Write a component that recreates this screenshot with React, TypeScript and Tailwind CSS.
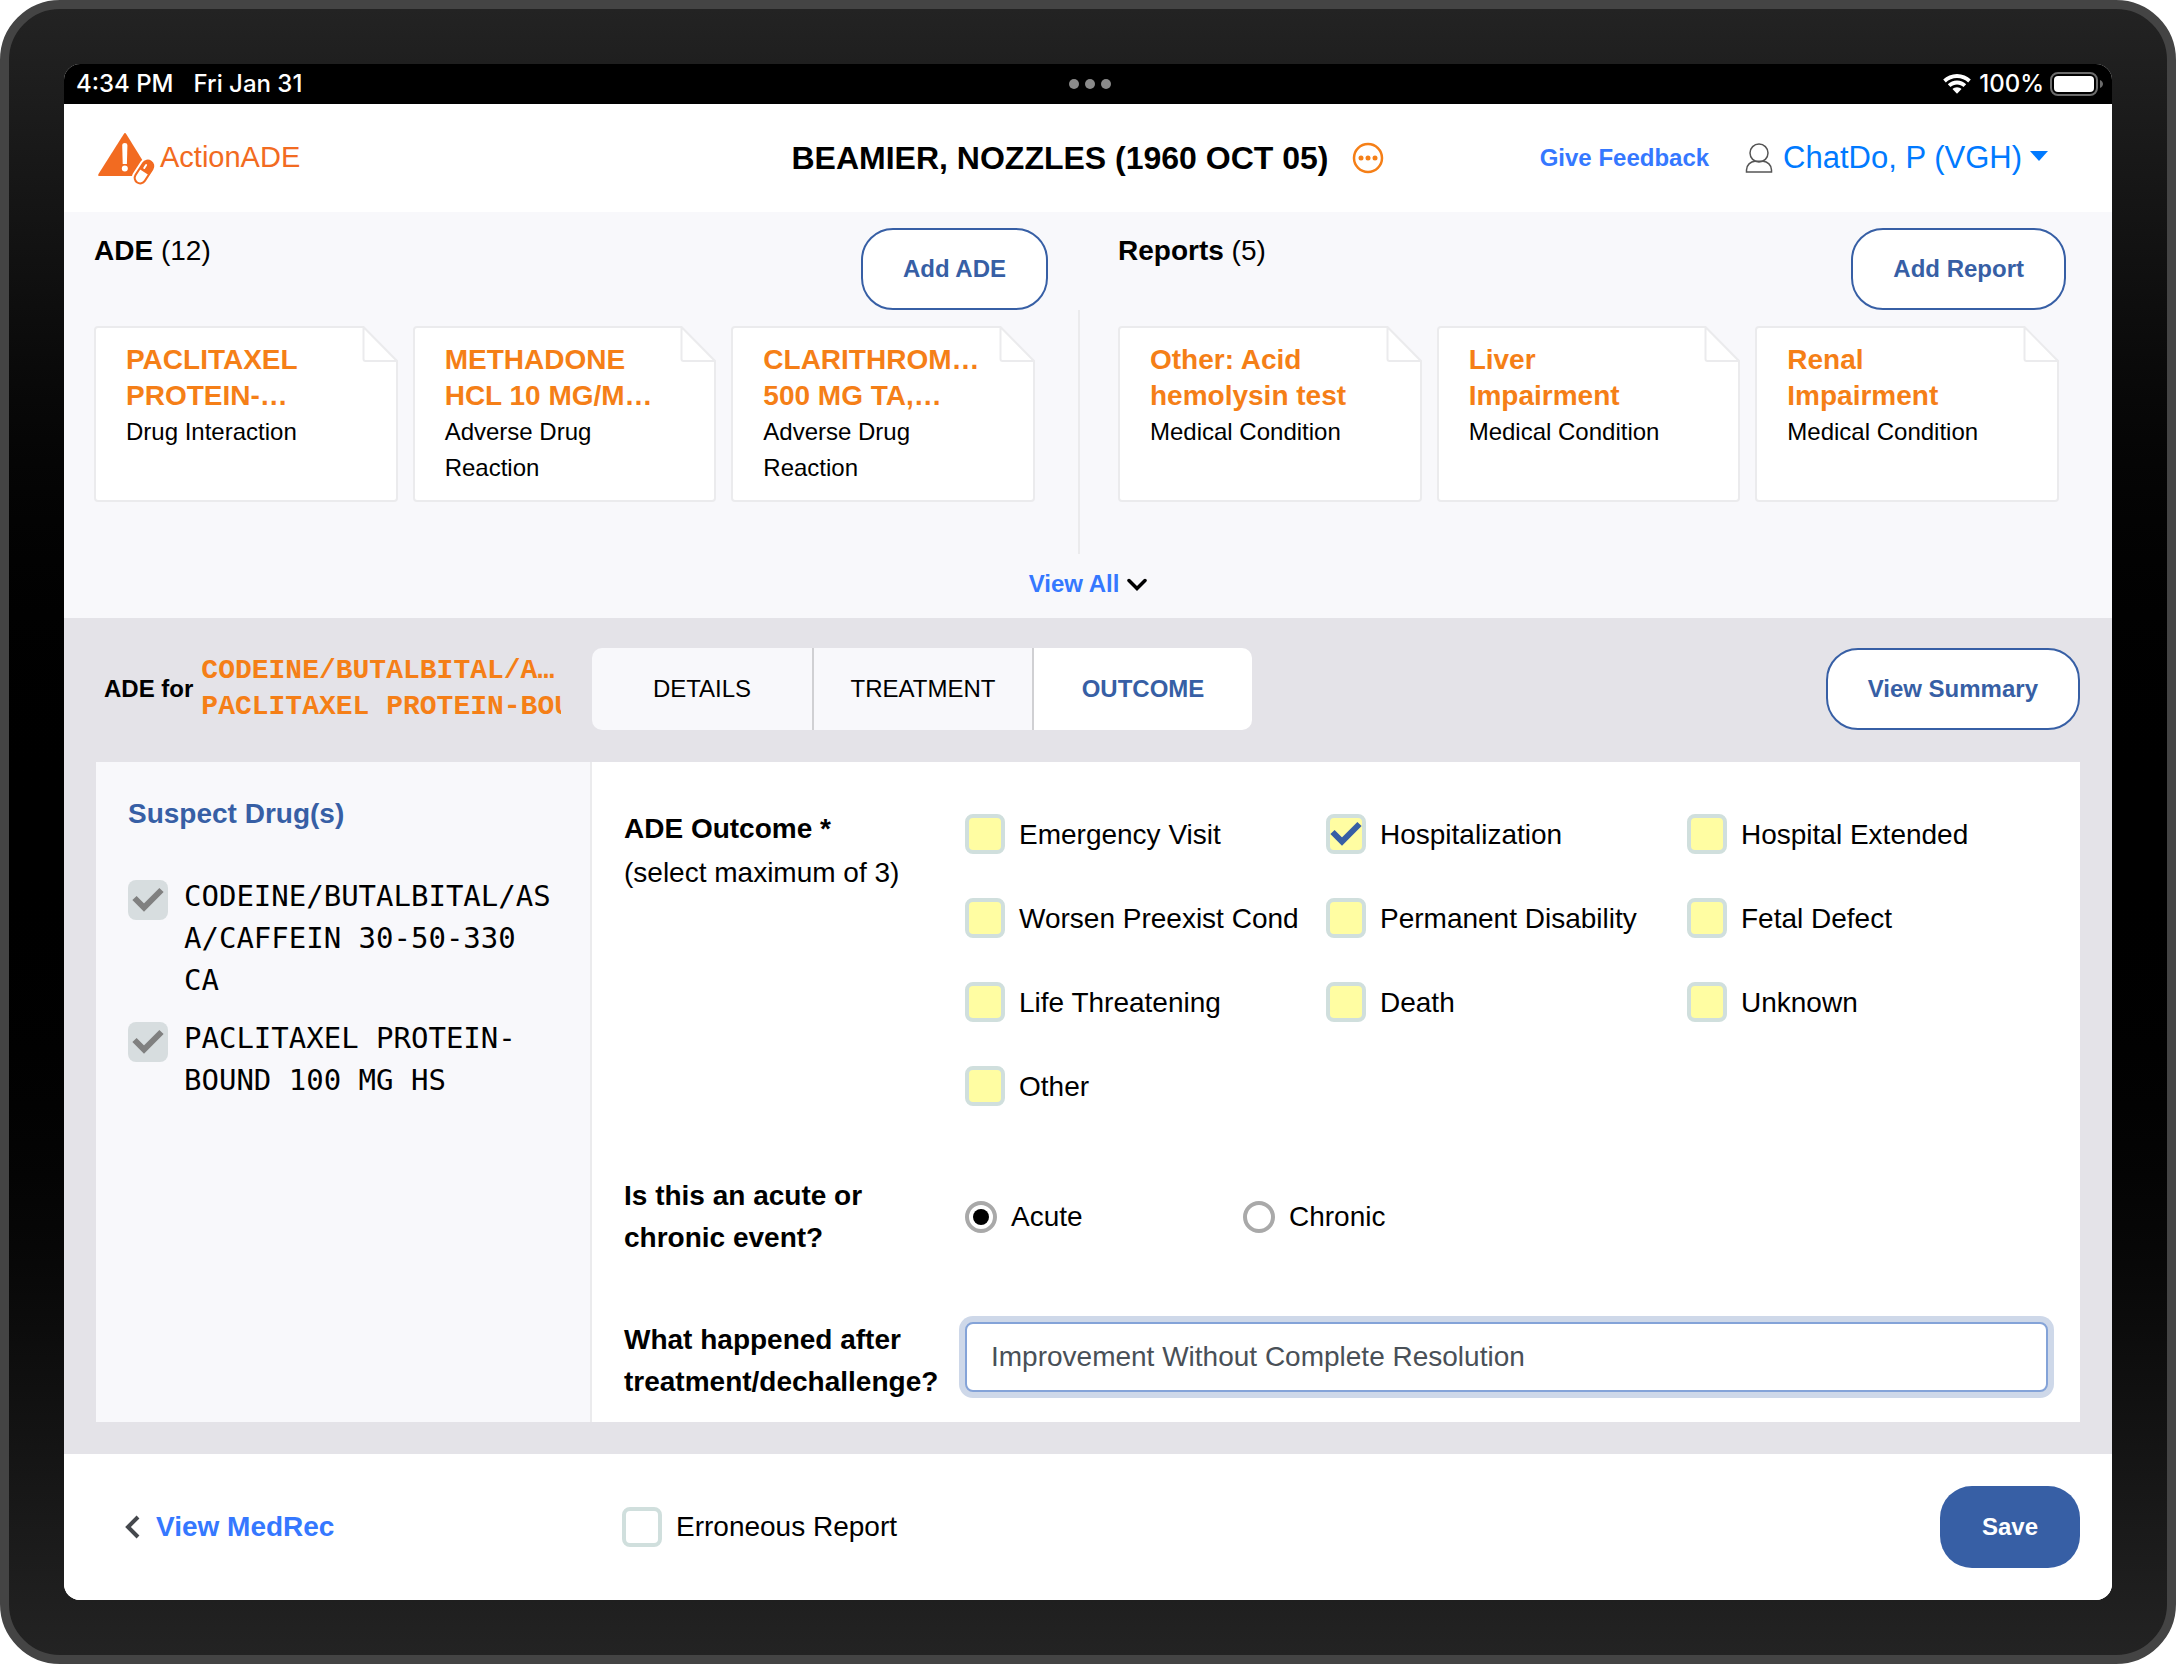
import { useState, type ReactNode } from "react";

type Card = { title: string; kind: string };

const adeCards: Card[] = [
  { title: "PACLITAXEL\nPROTEIN-…", kind: "Drug Interaction" },
  { title: "METHADONE\nHCL 10 MG/M…", kind: "Adverse Drug\nReaction" },
  { title: "CLARITHROM…\n500 MG TA,…", kind: "Adverse Drug\nReaction" },
];

const reportCards: Card[] = [
  { title: "Other: Acid\nhemolysin test", kind: "Medical Condition" },
  { title: "Liver\nImpairment", kind: "Medical Condition" },
  { title: "Renal\nImpairment", kind: "Medical Condition" },
];

const suspectDrugs = [
  "CODEINE/BUTALBITAL/AS\nA/CAFFEIN 30-50-330\nCA",
  "PACLITAXEL PROTEIN-\nBOUND 100 MG HS",
];

const outcomes = [
  "Emergency Visit",
  "Hospitalization",
  "Hospital Extended",
  "Worsen Preexist Cond",
  "Permanent Disability",
  "Fetal Defect",
  "Life Threatening",
  "Death",
  "Unknown",
  "Other",
];

function CheckMark({ className }: { className: string }) {
  return (
    <svg
      viewBox="0 0 40 40"
      fill="none"
      strokeWidth="6"
      className={`pointer-events-none absolute inset-0 size-10 ${className}`}
      aria-hidden="true"
    >
      <path d="M6.5 18 L16 27.5 L33.5 10" />
    </svg>
  );
}

function CheckBox({
  id,
  box,
  mark,
  checked,
  disabled,
  onChange,
}: {
  id: string;
  box: string;
  mark: string;
  checked: boolean;
  disabled?: boolean;
  onChange?: () => void;
}) {
  return (
    <span className="relative block size-10 shrink-0">
      <input
        id={id}
        type="checkbox"
        checked={checked}
        disabled={disabled}
        onChange={onChange ?? (() => {})}
        className={`block size-10 appearance-none rounded-lg ${box}`}
      />
      {checked && <CheckMark className={mark} />}
    </span>
  );
}

function OutlineButton({ children }: { children: ReactNode }) {
  return (
    <button
      type="button"
      className="h-[82px] shrink-0 rounded-[32px] border-2 border-[#375fa5] bg-white px-10 text-2xl font-bold text-[#375fa5]"
    >
      {children}
    </button>
  );
}

function DocumentCard({ card }: { card: Card }) {
  return (
    <article className="relative min-h-44 rounded-sm border-2 border-[#ebebed] bg-white py-[14px] pl-[30px] leading-9">
      <svg
        viewBox="0 0 37 37"
        className="absolute -top-0.5 -right-0.5 size-[37px]"
        fill="none"
        aria-hidden="true"
      >
        <path d="M2 0 H37 V35 Z" fill="#f8f8fb" />
        <path
          d="M2.5 1 V33 Q2.5 35 4.5 35 H36 Z"
          fill="#fff"
          stroke="#ebebed"
          strokeWidth="2"
          strokeLinejoin="round"
        />
      </svg>
      <h3 className="text-[28px] leading-9 font-bold whitespace-pre-line text-[#f57f17]">
        {card.title}
      </h3>
      <p className="text-2xl leading-9 whitespace-pre-line">{card.kind}</p>
    </article>
  );
}

function CardGroup({
  title,
  count,
  action,
  cards,
  className,
  cardsClassName,
}: {
  title: string;
  count: number;
  action: string;
  cards: Card[];
  className: string;
  cardsClassName: string;
}) {
  return (
    <section className={`min-w-0 ${className}`}>
      <div className="flex items-start justify-between">
        <h2 className="mt-0.5 text-[28px] leading-[42px]">
          <b>{title}</b> ({count})
        </h2>
        <OutlineButton>{action}</OutlineButton>
      </div>
      <div className={`mt-4 grid grid-cols-3 gap-[15px] ${cardsClassName}`}>
        {cards.map((c) => (
          <DocumentCard key={c.title} card={c} />
        ))}
      </div>
    </section>
  );
}

function StatusBar() {
  return (
    <div className="flex h-10 items-center justify-between bg-black font-['Inter',sans-serif] text-2xl font-medium text-white">
      <div className="flex flex-1 gap-5 pl-3">
        <span>4:34 PM</span>
        <span>Fri Jan 31</span>
      </div>
      <div className="flex gap-1.5">
        <span className="size-[10px] rounded-full bg-[#8a8a8a]" />
        <span className="size-[10px] rounded-full bg-[#8a8a8a]" />
        <span className="size-[10px] rounded-full bg-[#8a8a8a]" />
      </div>
      <div className="flex flex-1 items-center justify-end gap-2 pr-2">
        <svg viewBox="0 0 28 20" className="h-5 w-7" fill="#fff" aria-hidden="true">
          <path d="M14 0 C19.4 0 24.3 2.1 27.8 5.6 L25.2 8.4 C22.3 5.5 18.4 3.9 14 3.9 C9.6 3.9 5.7 5.5 2.8 8.4 L.2 5.6 C3.7 2.1 8.6 0 14 0 Z" />
          <path d="M14 6.6 C17.6 6.6 20.8 8 23.2 10.3 L20.5 13.1 C18.8 11.5 16.5 10.5 14 10.5 C11.5 10.5 9.2 11.5 7.5 13.1 L4.8 10.3 C7.2 8 10.4 6.6 14 6.6 Z" />
          <path d="M14 13.2 C15.8 13.2 17.4 13.9 18.5 15 L14 19.8 L9.5 15 C10.6 13.9 12.2 13.2 14 13.2 Z" />
        </svg>
        <span>100%</span>
        <svg viewBox="0 0 54 24" className="-ml-0.5 h-6 w-[54px]" fill="none" aria-hidden="true">
          <rect x="1" y="1" width="46" height="22" rx="7" stroke="#6b6b6b" strokeWidth="2" />
          <rect x="4" y="4" width="40" height="16" rx="4" fill="#fff" />
          <path d="M50 8 C52 9 53 10.5 53 12 C53 13.5 52 15 50 16 Z" fill="#6b6b6b" />
        </svg>
      </div>
    </div>
  );
}

function Header() {
  return (
    <header className="grid h-[108px] grid-cols-[1fr_auto_1fr] items-center bg-white">
      <a href="#home" className="flex items-center gap-[5px] pl-[33px] text-[29px] text-[#f26b21]">
        <svg viewBox="0 0 58 54" className="h-[54px] w-[58px]" aria-hidden="true">
          <path
            d="M29.2 3 L54 43 Q55 45 53 45 H2.5 Q.5 45 1.500 43 L26.800 3 Q28 1.200 29.200 3 Z"
            fill="#f26b21"
          />
          <path d="M25.200 14 Q25.200 12 27.800 12 Q30.400 12 30.400 14 L29.900 33 H25.700 Z" fill="#fff" />
          <circle cx="27.800" cy="37.500" r="3" fill="#fff" />
          <g transform="rotate(33 47 41)">
            <rect x="38.500" y="25.500" width="17" height="31" rx="8.500" fill="#fff" />
            <rect x="41.500" y="28.500" width="11" height="25" rx="5.500" fill="#fff" stroke="#f26b21" strokeWidth="2" />
            <path d="M41.500 41 V34 A5.500 5.500 0 0 1 52.500 34 V41 Z" fill="#f26b21" />
            <path d="M45 37.500 V34" stroke="#fff" strokeWidth="2" strokeLinecap="round" />
          </g>
        </svg>
        ActionADE
      </a>
      <div className="flex items-center gap-6">
        <h1 className="text-[32px] font-bold">BEAMIER, NOZZLES (1960 OCT 05)</h1>
        <button type="button" aria-label="Patient details">
          <svg viewBox="0 0 32 32" className="block size-8" fill="none" aria-hidden="true">
            <circle cx="16" cy="16" r="14" stroke="#f57f17" strokeWidth="2.500" />
            <g fill="#f57f17">
              <circle cx="9" cy="16" r="2.500" />
              <circle cx="16" cy="16" r="2.500" />
              <circle cx="23" cy="16" r="2.500" />
            </g>
          </svg>
        </button>
      </div>
      <div className="flex items-center justify-end pr-16">
        <a href="#feedback" className="text-2xl font-bold text-[#3578ff]">
          Give Feedback
        </a>
        <button type="button" className="ml-9 flex items-center text-[31px] text-[#007aff]">
          <svg viewBox="0 0 28 30" className="mr-2.5 h-[30px] w-7" fill="none" stroke="#555" strokeWidth="1.500" aria-hidden="true">
            <ellipse cx="14" cy="10" rx="9" ry="9" />
            <path d="M1.500 29 V27 C1.500 22 5.500 18.500 10 18.300 H18 C22.500 18.500 26.500 22 26.500 27 V29 Z" />
          </svg>
          ChatDo, P (VGH)
          <svg viewBox="0 0 18 10" className="mb-1 ml-2 h-[10px] w-[18px]" fill="#007aff" aria-hidden="true">
            <path d="M0 0 H18 L9 10 Z" />
          </svg>
        </button>
      </div>
    </header>
  );
}

function Summary() {
  return (
    <div className="bg-[#f8f8fb] pt-4 pb-4">
      <div className="grid grid-cols-[1014fr_2px_1032fr]">
        <CardGroup
          title="ADE"
          count={12}
          action="Add ADE"
          cards={adeCards}
          className="pr-[30px] pb-[52px] pl-[30px]"
          cardsClassName="mr-[13px]"
        />
        <div className="mt-[82px] bg-[#ebebed]" />
        <CardGroup
          title="Reports"
          count={5}
          action="Add Report"
          cards={reportCards}
          className="pr-[46px] pb-[52px] pl-[38px]"
          cardsClassName="mr-[7px]"
        />
      </div>
      <button type="button" className="mx-auto mt-3 flex items-center gap-2 text-2xl leading-9 font-bold text-[#3578ff]">
        View All
        <svg viewBox="0 0 20 13" className="h-[13px] w-5" fill="none" stroke="#000" strokeWidth="3.500" strokeLinecap="round" aria-hidden="true">
          <path d="M2 2.500 L10 10.500 L18 2.500" />
        </svg>
      </button>
    </div>
  );
}

function Tabs() {
  const [tab, setTab] = useState("OUTCOME");
  return (
    <div role="tablist" className="flex overflow-hidden rounded-[10px]">
      {["DETAILS", "TREATMENT", "OUTCOME"].map((t, i) => (
        <button
          key={t}
          type="button"
          role="tab"
          aria-selected={t === tab}
          onClick={() => setTab(t)}
          className={`h-[82px] w-[220px] text-2xl ${i > 0 ? "border-l-2 border-[#d0d0d3]" : ""} ${
            t === tab ? "bg-white font-bold text-[#375fa5]" : "bg-[#f8f8fb]"
          }`}
        >
          {t}
        </button>
      ))}
    </div>
  );
}

function OutcomeForm() {
  const [picked, setPicked] = useState<string[]>(["Hospitalization"]);
  const [course, setCourse] = useState("Acute");
  const [result, setResult] = useState("Improvement Without Complete Resolution");
  const toggle = (o: string) =>
    setPicked((p) => (p.includes(o) ? p.filter((x) => x !== o) : p.length < 3 ? [...p, o] : p));

  return (
    <form className="min-w-0 flex-1 bg-white px-8 pt-[45px] pb-[19px] text-[28px] leading-[42px]">
      <div role="group" aria-labelledby="outcome-title" className="flex">
        <div className="w-[341px] shrink-0 leading-[44px]">
          <p id="outcome-title" className="font-bold">
            ADE Outcome *
          </p>
          <p>(select maximum of 3)</p>
        </div>
        <div className="mt-[7px] grid flex-1 grid-cols-3 gap-y-[42px]">
          {outcomes.map((o) => {
            const id = `outcome-${o.replaceAll(" ", "-").toLowerCase()}`;
            return (
              <div key={o} className="flex gap-[14px]">
                <CheckBox
                  id={id}
                  checked={picked.includes(o)}
                  onChange={() => toggle(o)}
                  box="border-4 border-[#d0dfdd] bg-[#fffda2]"
                  mark="stroke-[#375fa5]"
                />
                <label htmlFor={id} className="whitespace-nowrap">
                  {o}
                </label>
              </div>
            );
          })}
        </div>
      </div>

      <div role="radiogroup" aria-labelledby="course-title" className="mt-[67px] flex items-center">
        <p id="course-title" className="w-[341px] shrink-0 font-bold">
          Is this an acute or
          <br />
          chronic event?
        </p>
        {["Acute", "Chronic"].map((c) => (
          <label key={c} className="flex w-[278px] items-center gap-[14px]">
            <input
              type="radio"
              name="course"
              checked={course === c}
              onChange={() => setCourse(c)}
              className="grid size-8 appearance-none place-items-center rounded-full border-4 border-[#a9a9a9] bg-white before:size-4 before:rounded-full checked:before:bg-black"
            />
            {c}
          </label>
        ))}
      </div>

      <div className="mt-[60px] flex items-start">
        <label htmlFor="result" className="w-[341px] shrink-0 font-bold">
          What happened after
          <br />
          treatment/dechallenge?
        </label>
        <input
          id="result"
          type="text"
          value={result}
          onChange={(e) => setResult(e.target.value)}
          className="mt-[3px] h-[70px] min-w-0 flex-1 rounded-lg border-2 border-[#84a3d8] bg-white px-6 text-[#495057] ring-6 ring-[#ced8e9] outline-none"
        />
      </div>
    </form>
  );
}

function Workspace() {
  return (
    <main className="flex-1 bg-[#e4e3e8] px-8 pt-[30px] pb-8">
      <div className="flex items-center">
        <div className="flex w-[496px] shrink-0 items-center gap-2 pr-[31px] pl-2">
          <b className="shrink-0 text-2xl">ADE for</b>
          <div className="min-w-0 flex-1 overflow-hidden font-['Liberation_Mono',monospace] text-[28px] leading-9 font-bold whitespace-nowrap text-[#f57f17]">
            <p>CODEINE/BUTALBITAL/A…</p>
            <p>PACLITAXEL PROTEIN-BOU</p>
          </div>
        </div>
        <Tabs />
        <div className="ml-auto flex">
          <OutlineButton>View Summary</OutlineButton>
        </div>
      </div>
      <div className="mt-8 flex">
        <aside className="w-[496px] shrink-0 border-r-2 border-[#ebebed] bg-[#f8f8fb] px-8 pt-[31px]">
          <h2 className="text-[28px] leading-[42px] font-bold text-[#375fa5]">Suspect Drug(s)</h2>
          <ul className="mt-10 flex flex-col gap-4">
            {suspectDrugs.map((d, i) => (
              <li key={d} className="flex items-start gap-4">
                <span className="mt-[5px]">
                  <CheckBox id={`drug-${i}`} checked disabled box="bg-[#d7dddf]" mark="stroke-[#808080]" />
                </span>
                <label
                  htmlFor={`drug-${i}`}
                  className="font-['DejaVu_Sans_Mono',monospace] text-[29px] leading-[42px] whitespace-pre"
                >
                  {d}
                </label>
              </li>
            ))}
          </ul>
        </aside>
        <OutcomeForm />
      </div>
    </main>
  );
}

function Footer() {
  const [erroneous, setErroneous] = useState(false);
  return (
    <footer className="flex items-center bg-white px-8 py-8">
      <div className="w-[526px] shrink-0 pl-7">
        <a href="#medrec" className="flex items-center gap-4 text-[28px] leading-[42px] font-bold text-[#3578ff]">
          <svg viewBox="0 0 16 24" className="h-6 w-4" fill="none" stroke="#45484d" strokeWidth="4" aria-hidden="true">
            <path d="M14 2 L4 12 L14 22" />
          </svg>
          View MedRec
        </a>
      </div>
      <div className="flex items-center gap-[14px]">
        <CheckBox
          id="erroneous"
          checked={erroneous}
          onChange={() => setErroneous(!erroneous)}
          box="border-4 border-[#d0dfdd] bg-white"
          mark="stroke-[#375fa5]"
        />
        <label htmlFor="erroneous" className="text-[28px] leading-[42px]">
          Erroneous Report
        </label>
      </div>
      <button type="button" className="ml-auto h-[82px] rounded-[32px] bg-[#375fa5] px-[42px] text-2xl font-bold text-white">
        Save
      </button>
    </footer>
  );
}

export default function App() {
  return (
    <div className="min-h-screen bg-white font-['Liberation_Sans',sans-serif] text-black">
      <div className="flex min-h-screen flex-col rounded-[60px] border-[9px] border-[#444] bg-linear-to-b from-[#232323] via-black to-[#232323] p-[55px]">
        <div className="flex flex-1 flex-col overflow-hidden rounded-2xl bg-white">
          <StatusBar />
          <Header />
          <Summary />
          <Workspace />
          <Footer />
        </div>
      </div>
    </div>
  );
}
